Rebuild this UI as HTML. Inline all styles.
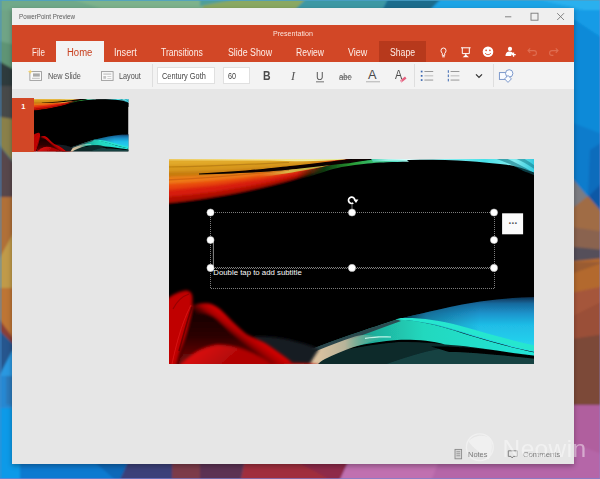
<!DOCTYPE html>
<html><head><meta charset="utf-8"><title>PowerPoint Preview</title>
<style>
html,body{margin:0;padding:0;}
body{width:600px;height:479px;overflow:hidden;position:relative;background:#1a8fd8;font-family:"Liberation Sans",sans-serif;}
#wall{position:absolute;left:0;top:0;width:600px;height:479px;}
#win{position:absolute;left:12px;top:8px;width:562px;height:456px;background:#e6e6e6;box-shadow:0 2px 5px rgba(0,0,0,.3);overflow:hidden;}
#title{position:absolute;left:0;top:0;width:562px;height:18px;background:#efefef;}
.t{position:absolute;white-space:nowrap;line-height:1;transform-origin:0 50%;display:inline-block;}
#rib{position:absolute;left:0;top:17px;width:562px;height:37.6px;background:#d24726;color:#fff;}
#tool{position:absolute;left:0;top:54px;width:562px;height:27px;background:#f3f3f3;}
#hometab{position:absolute;left:44.3px;top:16px;width:47.7px;height:22px;background:#f3f3f3;}
#shapetab{position:absolute;left:367px;top:16px;width:47px;height:21px;background:#b7391c;}
.tab{font-size:10px;top:22.5px;color:#fdeee8;}
.tl{font-size:8.4px;top:9.7px;color:#505050;}
.box{position:absolute;top:5.2px;height:17px;background:#fff;border:1px solid #e0e0e0;box-sizing:border-box;}
.sep{position:absolute;top:2px;width:1px;height:23px;background:#dedede;}
svg{position:absolute;overflow:visible;}
#thumbsel{position:absolute;left:0;top:90px;width:22px;height:54px;background:#d24726;}
#slide{position:absolute;left:157px;top:151px;width:365px;height:205px;background:#000;}
.h{fill:#fff;stroke:#bbb;stroke-width:.5;}
</style></head><body>
<svg width="0" height="0" style="position:absolute">
<defs>
<linearGradient id="gTL" x1="0" y1="0" x2="0" y2="1">
<stop offset="0" stop-color="#f6e27a"/><stop offset=".08" stop-color="#e3b23a"/><stop offset=".25" stop-color="#cf8f1c"/><stop offset=".36" stop-color="#9a5a0c"/><stop offset=".45" stop-color="#ef8a1c"/><stop offset=".6" stop-color="#ea4a12"/><stop offset=".78" stop-color="#cc1208"/><stop offset=".92" stop-color="#7a0602"/><stop offset="1" stop-color="#1a0000"/>
</linearGradient>
<linearGradient id="gTR" gradientUnits="userSpaceOnUse" x1="200" y1="0" x2="365" y2="0">
<stop offset="0" stop-color="#3cc8a0"/><stop offset=".12" stop-color="#a8f4ec"/><stop offset=".25" stop-color="#e4ffff"/><stop offset=".45" stop-color="#8ceef0"/><stop offset=".7" stop-color="#48e0e8"/><stop offset=".88" stop-color="#86ecf0"/><stop offset="1" stop-color="#34cce0"/>
</linearGradient>
<linearGradient id="gGr" gradientUnits="userSpaceOnUse" x1="128" y1="0" x2="238" y2="0">
<stop offset="0" stop-color="#0a2a0a" stop-opacity="0"/><stop offset=".25" stop-color="#0c3a10"/><stop offset=".5" stop-color="#2a9a34"/><stop offset=".72" stop-color="#38c074"/><stop offset=".9" stop-color="#58e0c8"/><stop offset="1" stop-color="#a0f0e8"/>
</linearGradient>
<linearGradient id="gPale" gradientUnits="userSpaceOnUse" x1="0" y1="0" x2="180" y2="0">
<stop offset="0" stop-color="#ecc860"/><stop offset=".3" stop-color="#f0d878"/><stop offset=".5" stop-color="#f4e690"/><stop offset=".8" stop-color="#f0eca0"/><stop offset="1" stop-color="#e0e890"/>
</linearGradient>
<linearGradient id="gOl" gradientUnits="userSpaceOnUse" x1="90" y1="0" x2="160" y2="0">
<stop offset="0" stop-color="#d8b040" stop-opacity="0"/><stop offset=".4" stop-color="#d8c050" stop-opacity=".9"/><stop offset="1" stop-color="#a8b040"/>
</linearGradient>
<linearGradient id="gBR" x1="0" y1="0" x2="0" y2="1">
<stop offset="0" stop-color="#0c3050"/><stop offset=".12" stop-color="#176a9e"/><stop offset=".3" stop-color="#1c94cc"/><stop offset=".5" stop-color="#1fbce6"/><stop offset="1" stop-color="#28dcf0"/>
</linearGradient>
<linearGradient id="gBRx" x1="0" y1="0" x2="1" y2="0">
<stop offset="0" stop-color="#000" stop-opacity=".75"/><stop offset=".35" stop-color="#000" stop-opacity=".25"/><stop offset="1" stop-color="#000" stop-opacity="0"/>
</linearGradient>
<linearGradient id="gFan" gradientUnits="userSpaceOnUse" x1="120" y1="0" x2="365" y2="0">
<stop offset="0" stop-color="#3a4a4a"/><stop offset=".2" stop-color="#1c7a70"/><stop offset=".36" stop-color="#1eb29e"/><stop offset=".55" stop-color="#22d8be"/><stop offset="1" stop-color="#24e4d8"/>
</linearGradient>
<linearGradient id="gCream" gradientUnits="userSpaceOnUse" x1="122" y1="0" x2="212" y2="0">
<stop offset="0" stop-color="#7a4a38"/><stop offset=".25" stop-color="#e0c4a0"/><stop offset=".6" stop-color="#b8b49a"/><stop offset="1" stop-color="#58b8a0" stop-opacity=".2"/>
</linearGradient>
<linearGradient id="gRed" gradientUnits="userSpaceOnUse" x1="0" y1="0" x2="24" y2="6">
<stop offset="0" stop-color="#f00c0c"/><stop offset=".5" stop-color="#e60808"/><stop offset="1" stop-color="#c00404"/>
</linearGradient>
<linearGradient id="gArch" gradientUnits="userSpaceOnUse" x1="0" y1="150" x2="0" y2="205">
<stop offset="0" stop-color="#140000"/><stop offset=".5" stop-color="#2c0404"/><stop offset=".8" stop-color="#5a0606"/><stop offset="1" stop-color="#8a0808"/>
</linearGradient>
<linearGradient id="gMound" gradientUnits="userSpaceOnUse" x1="30" y1="186" x2="50" y2="210">
<stop offset="0" stop-color="#e00a0a"/><stop offset="1" stop-color="#b00606"/>
</linearGradient>
<linearGradient id="gRidge" gradientUnits="userSpaceOnUse" x1="70" y1="166" x2="58" y2="182">
<stop offset="0" stop-color="#d40606"/><stop offset=".35" stop-color="#a80404"/><stop offset=".8" stop-color="#600202" stop-opacity=".25"/><stop offset="1" stop-color="#400" stop-opacity="0"/>
</linearGradient>
<filter id="b1" x="-5%" y="-5%" width="110%" height="110%"><feGaussianBlur stdDeviation="0.7"/></filter>
<filter id="b2" x="-10%" y="-10%" width="120%" height="120%"><feGaussianBlur stdDeviation="1.6"/></filter>
<filter id="b3" x="-20%" y="-20%" width="140%" height="140%"><feGaussianBlur stdDeviation="3"/></filter>
<clipPath id="artclip"><rect x="0" y="0" width="365" height="205"/></clipPath>
<symbol id="art" viewBox="0 0 365 205" preserveAspectRatio="none">
<g clip-path="url(#artclip)">
<rect width="365" height="205" fill="#000"/>
<!-- top-left warm band -->
<g filter="url(#b2)">
<path d="M-6,-6 L-6,45 C40,41 90,31 124,21 C150,13 170,6 190,-6 Z" fill="#b00c06"/>
<path d="M-6,-6 L-6,38 C40,35 90,26 124,17 C150,10 168,4 184,-6 Z" fill="#d81c0a"/>
<path d="M-6,-6 L-6,31 C40,28 90,21 124,13.5 C150,8 166,3 180,-6 Z" fill="#e84610"/>
<path d="M-6,-6 L-6,25 C40,23 90,17 124,11 C150,6 164,2 174,-6 Z" fill="#ee7c18"/>
<path d="M-6,-6 L-6,18 C40,17 90,13 124,9 C150,5 160,2 170,-6 Z" fill="#c47a10"/>
<path d="M-6,-6 L-6,13 C40,13 90,9.5 124,6.5 C150,3.5 160,1 166,-6 Z" fill="#d8981c"/>
<path d="M-6,-6 L-6,6 C40,6 90,4.5 124,3 C150,1.5 156,0 162,-6 Z" fill="#e2aa2a"/>
</g>
<g filter="url(#b1)">
<path d="M-3,-3 L-3,1.6 C40,1.6 70,1.4 100,1.4 C130,2.6 150,2.4 176,0.6 L182,-3 Z" fill="url(#gPale)"/>
<path d="M90,12 C110,9.5 125,8 140,6.6 C150,6 156,6 160,6.2 C150,8.5 140,10.5 128,12.5 C115,15 100,17 90,18 Z" fill="url(#gOl)"/>
<path d="M128,13 C140,11 150,9 160,6.4 C176,3 195,1.4 211,0.6 C220,0.2 228,0 236,-1 L240,3 C225,3 210,4 195,6 C180,8 165,12 150,16 L128,20 Z" fill="url(#gGr)"/>
</g>
<path d="M-6,45.5 C40,41.5 90,31.5 124,21.5 C150,13.5 172,6 192,-5 L220,-5 L220,60 L-6,60 Z" fill="#000" filter="url(#b1)" opacity="0"/>
<path d="M-3,8 C40,7.4 80,5.6 120,3.4" fill="none" stroke="#9a6208" stroke-width="1.2" opacity=".45" filter="url(#b1)"/>
<path d="M-3,21 C40,19 80,15.4 120,11" fill="none" stroke="#b04808" stroke-width="1.4" opacity=".4" filter="url(#b1)"/>
<path d="M30,14.6 C60,13.2 85,11 105,8.8 C118,7.4 126,6.6 131,6 C150,3.8 165,2.2 176,0.8 C184,0 190,-1 196,-3 L214,-3 C200,1 186,3.6 176,4.6 C160,6.4 146,8 131,9.6 C120,10.8 112,11.6 100,12.4 C80,13.8 60,14.8 30,15.4 Z" fill="#070300" filter="url(#b1)"/>
<!-- top-right cool band -->
<g filter="url(#b1)">
<path d="M200,-3 L370,-3 L370,16 C355,9 345,6.5 331,5 C320,3.6 310,3 301,2.2 C285,1.2 268,0.8 251,0.8 C235,1 220,1.6 204,2.8 Z" fill="url(#gTR)"/>
<path d="M318,-3 L332,-3 C346,3 356,8 368,16 L368,22 C356,12 340,3 318,-3 Z" fill="#0c6a78" opacity=".55"/>
<path d="M340,-3 L350,-3 C358,1 362,4 368,8 L368,12 C360,6 352,1 340,-3 Z" fill="#0c6a78" opacity=".45"/>
</g>
<path d="M-6,46.5 C40,42.5 90,32.5 124,22.5 C137,18.4 150,14.6 159,11.4 C166,9.4 172,8.2 176,7.6 C190,5.4 200,4.4 211,3.6 C220,3 235,2.6 251,2.4 C268,2.4 285,2.8 301,3.8 C310,4.6 320,5.4 331,7 C345,8.8 355,11.6 370,18 L370,30 L120,60 L-6,60 Z" fill="#000" filter="url(#b1)"/>
<!-- bottom-right wave -->
<g filter="url(#b1)">
<!-- dark underlay -->
<path d="M120,206 C150,196 190,186 230,183 C270,182 320,190 368,199 L368,206 Z" fill="#0b2a2b"/>
<path d="M215,206 C240,197 262,190 285,188.5 C320,190 345,194 368,198.5 L368,206 Z" fill="#1a4848" opacity=".85"/>
<path d="M262,187.5 C300,187 335,192 368,198 L368,200 C335,196.5 300,193 280,193 Z" fill="#000"/>
<path d="M88,180 C100,187 114,196 128,205 L84,206 Z" fill="#101c22"/>
<!-- main body -->
<path d="M228,160.5 C240,157.5 250,155 261,152.5 C280,148 295,145 311,142.5 C330,140 348,138.4 368,138 L368,193.5 C350,190 335,186 321,182 C300,176 285,171 271,167.5 C255,163.5 240,161.5 228,160.5 Z" fill="url(#gBR)"/>
<path d="M228,160.5 C240,157.5 250,155 261,152.5 C280,148 295,145 311,142.5 L311,180 C285,171 255,163.5 228,160.5 Z" fill="url(#gBRx)"/>
<!-- fan -->
<path d="M104,206 C112,202 118,199.6 124,197.4 C140,191 160,183.4 181,176 C200,169.6 215,164.6 228,160.5 C245,161 262,164.5 280,170 C300,176 330,186 368,194 L368,197 C340,194 310,188 276,185.6 C262,181.6 245,180.4 228,181 C200,183 170,190 146,199 C140,201.6 134,204 130,206 Z" fill="url(#gFan)"/>
<path d="M104,206 C112,202 118,199.6 124,197.4 C140,191 160,183.4 181,176 C200,169.6 215,164.6 228,160.5 L232,162 C215,168 200,173.6 182,180.6 C160,188.4 140,196.4 118,206 Z" fill="#2e4048" opacity=".9"/>
<path d="M118,206 C136,196 160,186 186,177.4 C197,175 206,176 214,179.6 C196,184 172,192 156,200 C152,202 150,204 148,206 Z" fill="url(#gCream)"/>
<!-- ridge -->
<path d="M226,160.6 C250,161.4 270,166 290,172 C320,181 345,188 368,192.8 L368,187 C345,182 320,175 290,166.5 C270,161 250,158.4 232,159 Z" fill="#27e6cf"/>
<path d="M196,178.8 C204,177.2 213,176.8 222,177.4 L222,178.6 C213,178.2 204,178.6 196,180 Z" fill="#d8fff6" opacity=".85"/>
</g>
<!-- bottom-left red shapes -->
<path d="M84,178 C100,176 125,180 150,190 L140,206 L110,206 Z" fill="#121b21" filter="url(#b2)"/>
<g filter="url(#b2)">
<path d="M23,147 C28,144.6 34,143.6 40,144.6 C48,146.6 52,151 58,157 C66,165 72,171 78,175.4 C84,178.6 90,180.6 96,184 C104,189 112,195 120,201 L126,210 L8,210 C12,196 18,170 23,147 Z" fill="url(#gArch)"/>
<path d="M10,208 C20,196 34,187.6 48,186 C64,185.6 84,192 104,206 L104,210 L10,210 Z" fill="url(#gMound)"/>
<path d="M23,147 C28,144.6 34,143.6 40,144.6 C48,146.6 52,151 58,157 C66,165 72,171 78,175.4 C84,178.6 90,180.6 96,184 C104,189 112,195 120,201 L128,208 L104,208 C96,200 86,192 76,185 C66,178 56,168 48,160 C42,154.6 34,153 26,155 Z" fill="url(#gRidge)"/>
<path d="M-6,143 C0,138 8,133 16,131.6 C21,131.4 23,134 23.4,138 C23.6,142 23.4,145 23,148 C21,160 17,176 12,190 C10,196 8,204 7,210 L-6,210 Z" fill="url(#gRed)"/>
<path d="M100,206 C115,203 135,203 150,206 L150,210 L100,210 Z" fill="#b00808"/>
</g>
<g filter="url(#b1)">
<path d="M4,150 C8,142 14,137 20,135" fill="none" stroke="#7a0000" stroke-width="1.2" opacity=".6"/>
<path d="M2,210 C6,190 12,165 22,146" fill="none" stroke="#ff3a3a" stroke-width="1" opacity=".35"/>
<path d="M10,192 C14,178 18,162 23,148" fill="none" stroke="#500" stroke-width="1.6" opacity=".7"/>
</g>
</g>
</symbol>
</defs>
</svg>

<svg id="wall" viewBox="0 0 600 479" width="600" height="479">
<defs><filter id="wb" x="-5%" y="-5%" width="110%" height="110%"><feGaussianBlur stdDeviation="1.2"/></filter></defs>
<rect width="600" height="479" fill="#1588d6"/>
<g filter="url(#wb)">
<!-- top strip -->
<rect x="-5" y="-5" width="215" height="20" fill="#6fa98a"/>
<polygon points="60,-5 210,-5 210,15 120,15" fill="#7db28c"/>
<polygon points="200,-5 310,-5 290,15 205,15" fill="#8aa862"/>
<polygon points="200,-5 260,-5 200,6" fill="#4f9f98"/>
<polygon points="310,-5 390,-5 380,15 290,15" fill="#3e98a4"/>
<polygon points="390,-5 445,-5 425,15 380,15" fill="#1b6c8c"/>
<polygon points="445,-5 605,-5 605,15 425,15" fill="#1fa4e6"/>
<polygon points="520,-5 605,-5 605,15" fill="#2bb0ee"/>
<!-- right strip -->
<rect x="565" y="10" width="40" height="170" fill="#139be6"/>
<polygon points="575,20 605,40 605,180 565,180 565,20" fill="#0d8ad8"/>
<polygon points="565,120 605,135 605,215 565,185" fill="#0c7ccc"/>
<polygon points="590,150 605,140 605,215 588,197" fill="#0a6cbc"/>
<polygon points="605,180 605,215 588,197" fill="#0a58a6"/>
<polygon points="565,170 588,197 565,214" fill="#7c7c82"/>
<polygon points="565,214 588,196 605,216 605,262 565,262" fill="#a06c44"/>
<polygon points="565,226 605,232 605,262 565,262" fill="#8a6450"/>
<polygon points="565,246 605,250 605,264 565,264" fill="#55505a"/>
<polygon points="565,262 605,258 605,300 565,300" fill="#b3692f"/>
<polygon points="565,262 605,262 565,276" fill="#9a5c30"/>
<polygon points="565,294 605,286 605,350 565,350" fill="#a5563a"/>
<polygon points="565,320 605,300 605,350 565,350" fill="#9a5038"/>
<polygon points="565,340 605,334 605,406 565,406" fill="#7c4a38"/>
<rect x="565" y="405" width="40" height="80" fill="#b05e9e"/>
<polygon points="565,440 605,455 605,484 565,484" fill="#b566a8"/>
<!-- bottom strip -->
<rect x="-5" y="458" width="135" height="26" fill="#0e7ad0"/>
<polygon points="-5,458 12,458 20,484 -5,484" fill="#1b98e8"/>
<polygon points="90,458 130,458 120,484" fill="#0c68b8"/>
<polygon points="130,458 175,458 175,484 118,484" fill="#3a4079"/>
<rect x="172" y="458" width="30" height="26" fill="#7b3a48"/>
<polygon points="200,458 245,458 240,484 200,484" fill="#5c3052"/>
<polygon points="245,458 350,458 338,484 240,484" fill="#a02f3c"/>
<polygon points="290,458 350,458 338,484" fill="#8e2a48"/>
<polygon points="350,458 605,458 605,484 338,484" fill="#b566a8"/>
<polygon points="350,458 440,458 430,484 338,484" fill="#c070b0"/>
<!-- left strip -->
<rect x="-5" y="10" width="25" height="45" fill="#6fa486"/>
<polygon points="-5,40 20,46 20,75 -5,62" fill="#5f9474"/>
<polygon points="-5,59 20,73 20,124 -5,124" fill="#2f3b3d"/>
<polygon points="-5,86 20,86 20,124 -5,124" fill="#474848"/>
<polygon points="-5,116 20,120 20,170 -5,140" fill="#8a8048"/>
<polygon points="-5,140 20,171 20,200 -5,200" fill="#59474c"/>
<rect x="-5" y="197" width="25" height="75" fill="#b07038"/>
<polygon points="-5,266 14,232 20,232 20,292 -5,292" fill="#c09a48"/>
<polygon points="-5,288 20,288 20,349 -5,316" fill="#bd7436"/>
<polygon points="-5,314 20,347 20,353 -5,328" fill="#8a4038"/>
<polygon points="-5,326 20,351 20,378 -5,378" fill="#25568e"/>
<polygon points="12,351 20,350 20,384 -5,384" fill="#2a98e0"/>
<rect x="-5" y="376" width="25" height="36" fill="#2688d2"/>
<polygon points="6,376 20,376 20,408 6,404" fill="#2a7abc"/>
<rect x="-5" y="408" width="25" height="76" fill="#109ae8"/>
</g>
<rect x="0" y="0" width="600" height="1" fill="#4aa0c8" opacity=".8"/>
<rect x="-1" y="0" width="2.6" height="479" fill="#3f8ecf" opacity=".6" filter="url(#wb)"/>
<rect x="0" y="478" width="600" height="1" fill="#7a80d0" opacity=".7"/>
<rect x="599" y="0" width="1" height="479" fill="#8a86d0" opacity=".35"/>
</svg>

<div id="win">
<div id="title"><span class="t" style="left:7px;top:6px;font-size:6.8px;color:#5a5a5a;transform:scaleX(.92)">PowerPoint Preview</span>
<svg style="left:0;top:0" width="562" height="18" viewBox="0 0 562 18"><g stroke="#777" stroke-width=".9" fill="none"><path d="M493,8.8H499.3"/><rect x="519" y="5.2" width="7" height="7"/><path d="M545.2,5.2L552,12M552,5.2L545.2,12"/></g></svg>
</div>
<div id="rib">
<span class="t" style="left:261px;top:4.5px;font-size:7.4px;color:#fbe3da;transform:scaleX(.96)">Presentation</span>
<div id="hometab"></div>
<div id="shapetab"></div>
<span class="t tab" style="left:19.5px;transform:scaleX(.80)">File</span>
<span class="t tab" style="left:54.7px;color:#c8401f;transform:scaleX(.95)">Home</span>
<span class="t tab" style="left:102.2px;transform:scaleX(.91)">Insert</span>
<span class="t tab" style="left:149.2px;transform:scaleX(.86)">Transitions</span>
<span class="t tab" style="left:216px;transform:scaleX(.88)">Slide Show</span>
<span class="t tab" style="left:283.7px;transform:scaleX(.855)">Review</span>
<span class="t tab" style="left:335.5px;transform:scaleX(.90)">View</span>
<span class="t tab" style="left:377.5px;transform:scaleX(.865)">Shape</span>
<svg style="left:0;top:0" width="562" height="37" viewBox="0 0 562 37">
<!-- lightbulb -->
<g fill="none" stroke="#fff" stroke-width=".95">
<path d="M430.3,30.4V28.3C429.4,27.6 429,26.6 429,25.5A2.5,2.5 0 0 1 434,25.5C434,26.6 433.6,27.6 432.7,28.3V30.4Z"/><path d="M430.2,31.8H432.8"/>
</g>
<!-- presentation -->
<g fill="none" stroke="#fff" stroke-width="1">
<path d="M449,22.8H458.6M450.3,22.8V28.6H457.3V22.8M453.8,28.6V30.4"/>
</g>
<path d="M453.8,29.6L457,32.2H450.6Z" fill="#fff"/>
<!-- smiley -->
<circle cx="476" cy="26.8" r="5.3" fill="#fff"/>
<circle cx="474.1" cy="25.4" r=".8" fill="#d24726"/><circle cx="477.9" cy="25.4" r=".8" fill="#d24726"/>
<path d="M473.2,28C474,30.2 478,30.2 478.8,28" fill="none" stroke="#d24726" stroke-width=".9"/>
<!-- share -->
<g fill="#fff"><circle cx="498" cy="23.9" r="2.1"/><path d="M493.5,31C493.5,27.6 495.4,26.4 497.6,26.4C499.8,26.4 501.2,27.6 501.4,29.2H499.2V31Z"/><path d="M500.9,27.6h1.3v1.4h1.5v1.3h-1.5v1.5h-1.3v-1.5h-1.5v-1.3h1.5z"/></g>
<!-- undo/redo -->
<g fill="none" stroke="#e58268" stroke-width="1.1" opacity=".65">
<path d="M516,25.6H522A2.4,2.4 0 0 1 522,30.4H520.6M518.2,23.4L516,25.6L518.2,27.8"/>
<path d="M546,25.6H540A2.4,2.4 0 0 0 540,30.4H541.4M543.8,23.4L546,25.6L543.8,27.8"/>
</g>
</svg>
</div>
<div id="tool">
<span class="t tl" style="left:36.3px;transform:scaleX(.87)">New Slide</span>
<span class="t tl" style="left:107.3px;transform:scaleX(.87)">Layout</span>
<div class="sep" style="left:140px;"></div>
<div class="box" style="left:145px;width:58px;"></div>
<span class="t tl" style="left:149.6px;transform:scaleX(.88);color:#444">Century Goth</span>
<div class="box" style="left:211px;width:27px;"></div>
<span class="t tl" style="left:216px;transform:scaleX(.86);color:#444">60</span>
<span class="t" style="left:251px;top:8px;font-size:12.2px;font-weight:bold;color:#4a4a4a;transform:scaleX(.86)">B</span>
<span class="t" style="left:278.6px;top:8px;font-size:12.2px;font-style:italic;font-family:'Liberation Serif',serif;color:#555;transform:scaleX(1.02)">I</span>
<span class="t" style="left:303.8px;top:8.2px;font-size:11.6px;color:#555;transform:scaleX(.9)">U</span>
<span class="t" style="left:327.3px;top:10.5px;font-size:8.6px;color:#555;transform:scaleX(.9)">abc</span>
<span class="t" style="left:355.9px;top:7.4px;font-size:12.8px;color:#4a4a4a;transform:scaleX(1.0)">A</span>
<span class="t" style="left:383.3px;top:7.4px;font-size:12.8px;color:#4a4a4a;transform:scaleX(.84)">A</span>
<div class="sep" style="left:401.5px;"></div>
<div class="sep" style="left:480.5px;"></div>
<svg style="left:0;top:0" width="562" height="27" viewBox="0 0 562 27">
<!-- new slide icon -->
<rect x="17.9" y="9.6" width="11.6" height="8.8" fill="#fafafa" stroke="#9a9a9a" stroke-width=".9"/>
<rect x="21" y="11.4" width="6.8" height="3.2" fill="#a9a9a9"/><rect x="20" y="15.8" width="7.8" height=".9" fill="#b5b5b5"/>
<path d="M18.2,7.4l.7,1.6l1.6,.7l-1.6,.7l-.7,1.6l-.7,-1.6l-1.6,-.7l1.6,-.7z" fill="#f3d26a"/>
<!-- layout icon -->
<rect x="89.5" y="9.6" width="11.6" height="8.8" fill="#fafafa" stroke="#9a9a9a" stroke-width=".9"/>
<rect x="91.3" y="11.3" width="8" height="1.6" fill="#cfcfcf"/><rect x="91.3" y="14" width="2.8" height="2.8" fill="#c4c4c4"/><rect x="95.3" y="14.2" width="4" height=".8" fill="#c9c9c9"/><rect x="95.3" y="16" width="4" height=".8" fill="#c9c9c9"/>
<!-- U underline, abc strike, A underline -->
<rect x="304" y="27" width="8" height=".9" fill="#666" transform="translate(0,-7.6)"/>
<rect x="327.2" y="22.3" width="12.8" height=".8" fill="#666" transform="translate(0,-7.6)"/>
<rect x="354" y="26.6" width="14" height="1.4" fill="#c4c4c4" transform="translate(0,-7.6)"/>
<!-- eraser -->
<path d="M388,18.5L393,14.5L394.5,16.5L389.5,20.5Z" fill="#e4607e"/><path d="M388,18.5L389.2,17.5L390.7,19.5L389.5,20.5Z" fill="#f0a0b4"/>
<!-- bullets -->
<g fill="#3a66b0"><rect x="408.8" y="8.7" width="1.7" height="1.7"/><rect x="408.8" y="13" width="1.7" height="1.7"/><rect x="408.8" y="17.2" width="1.7" height="1.7"/></g>
<g fill="#8d8d8d"><rect x="412.4" y="9.1" width="8.8" height=".9"/><rect x="412.4" y="13.4" width="8.8" height=".9" fill="#b5b5b5"/><rect x="412.4" y="17.6" width="8.8" height=".9"/></g>
<!-- numbered -->
<g fill="#3a66b0"><rect x="435.8" y="8.2" width="1" height="2.6"/><rect x="435.8" y="12.5" width="1" height="2.6"/><rect x="435.8" y="16.8" width="1" height="2.6"/></g>
<g fill="#8d8d8d"><rect x="438.6" y="9.1" width="8.8" height=".9"/><rect x="438.6" y="13.4" width="8.8" height=".9" fill="#b5b5b5"/><rect x="438.6" y="17.6" width="8.8" height=".9"/></g>
<!-- chevron -->
<path d="M464,12.4L467,15.4L470,12.4" fill="none" stroke="#333" stroke-width="1.3"/>
<!-- shapes -->
<g fill="#fafcff" stroke="#6f8fc6" stroke-width=".9"><rect x="487.4" y="10.6" width="7.4" height="6.8"/><circle cx="497.2" cy="11.4" r="3.7"/><path d="M496,13.4L499.4,16.9L496,20.4L492.6,16.9Z"/></g>
</svg>
</div>
<!-- thumbnail -->
<div id="thumbsel"><span class="t" style="left:9.2px;top:5.2px;font-size:7.4px;font-weight:bold;color:#fff;">1</span></div>
<svg style="left:22px;top:90.5px" width="94.5" height="52.5" viewBox="0 0 365 205" preserveAspectRatio="none"><use href="#art" width="365" height="205"/></svg>
<!-- slide -->
<div id="slide">
<svg style="left:0;top:0" width="365" height="205" viewBox="0 0 365 205"><use href="#art" width="365" height="205"/>
<g fill="none" stroke="#7c7c7c" stroke-width="1" stroke-dasharray="1 1" shape-rendering="crispEdges">
<path d="M42,53.5H325M42,108.5H325M43,109.5H325M42,129.5H325M41.5,54V130M325.5,54V130"/>
</g>
<path d="M44.4,82V107" stroke="#9a9a9a" stroke-width=".9"/>
<path d="M183,45.5V50.5" stroke="#aaa" stroke-width=".7"/>
<path d="M184.3,44.07A3.2,3.2 0 1 1 185.9,41.3" fill="none" stroke="#fff" stroke-width="1.7"/>
<path d="M184.4,40.5L189.4,40.5L187,43.9Z" fill="#fff"/>
<g class="h"><circle cx="41.5" cy="53.5" r="3.6"/><circle cx="183" cy="53.5" r="3.6"/><circle cx="325" cy="53.5" r="3.6"/><circle cx="41.5" cy="81" r="3.6"/><circle cx="325" cy="81" r="3.6"/><circle cx="41.5" cy="108.9" r="3.6"/><circle cx="183" cy="108.9" r="3.6"/><circle cx="325" cy="108.9" r="3.6"/></g>
<rect x="333.1" y="54.3" width="21" height="21" fill="#fbfbfb"/>
</svg>
<span class="t" style="left:339.6px;top:57.4px;font-size:10px;font-weight:bold;color:#555;letter-spacing:.15px;">...</span>
<span class="t" style="left:44.3px;top:110.2px;font-size:7.8px;color:#fafafa;transform:scaleX(1)">Double tap to add subtitle</span>
</div>
<!-- bottom bar -->
<svg style="left:0;top:0" width="562" height="456" viewBox="0 0 562 456">
<g opacity=".42" fill="#fff"><circle cx="467.8" cy="439.3" r="13.4" fill="none" stroke="#fff" stroke-width="1.3"/><path d="M456.5,433.5C461,427.5 472,425.5 478.5,430.5C481,437 480,446 476.5,451.5C470,446 461.5,440.5 456.5,433.5Z"/></g>
<rect x="443" y="441.4" width="6.6" height="9.4" fill="#d8d8d8" stroke="#8a8a8a" stroke-width=".9"/>
<g fill="#8a8a8a"><rect x="444.4" y="443.4" width="3.8" height=".8"/><rect x="444.4" y="445.4" width="3.8" height=".8"/><rect x="444.4" y="447.4" width="3.8" height=".8"/></g>
<path d="M496.3,442.8H505.3V448.4H501.4L500.2,450L499,448.4H496.3Z" fill="none" stroke="#777" stroke-width=".9"/>
</svg>
<span class="t" style="left:456.4px;top:443.2px;font-size:7.4px;color:#7a7a7a;transform:scaleX(1.01)">Notes</span>
<span class="t" style="left:511px;top:443.2px;font-size:7.4px;color:#7a7a7a;transform:scaleX(1.045)">Comments</span>
</div>
<span class="t" style="left:502.6px;top:436.9px;font-size:24.5px;color:#fff;opacity:.45;letter-spacing:.35px;">Neowin</span>

</body></html>
